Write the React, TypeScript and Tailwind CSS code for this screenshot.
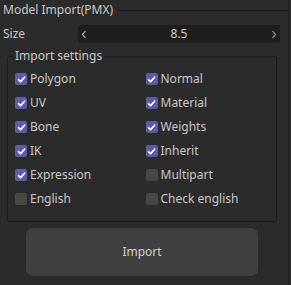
import React from "react";

const Check = ({ checked }: { checked: boolean }) => (
  <span
    className={
      "w-[12px] h-[12px] rounded-[2px] flex items-center justify-center " +
      (checked ? "bg-[#5e5ca6]" : "bg-[#474747]")
    }
  >
    {checked && (
      <svg width="9" height="9" viewBox="0 0 9 9">
        <path d="M1.5 4.6 L3.6 6.6 L7.6 2.2" stroke="#ffffff" strokeWidth="1.7" fill="none" strokeLinecap="round" strokeLinejoin="round" />
      </svg>
    )}
  </span>
);

const Item = ({ label, checked }: { label: string; checked: boolean }) => (
  <div className="flex items-center h-[24px] gap-[3px]">
    <Check checked={checked} />
    <span className="leading-none">{label}</span>
  </div>
);

export default function App() {
  const left: [string, boolean][] = [
    ["Polygon", true],
    ["UV", true],
    ["Bone", true],
    ["IK", true],
    ["Expression", true],
    ["English", false],
  ];
  const right: [string, boolean][] = [
    ["Normal", true],
    ["Material", true],
    ["Weights", true],
    ["Inherit", true],
    ["Multipart", false],
    ["Check english", false],
  ];
  return (
    <div
      className="w-[291px] h-[285px] bg-[#2b2b2b] text-[#c9c9c9] text-[12px] overflow-hidden"
      style={{ fontFamily: '"Noto Sans", "Open Sans", sans-serif' }}
    >
      <div className="relative w-[289px] h-[285px] border-r border-[#1e1e1e]">
        <div className="flex items-center h-[20px] pl-[3px]">
          <span className="leading-none mr-[4px]">Model Import(PMX)</span>
          <div className="flex-1 h-px bg-[#1e1e1e]" />
        </div>
        <div className="flex items-center mt-[5px] h-[18px] pl-[3px] pr-[8px]">
          <span className="w-[75px] leading-none">Size</span>
          <div className="flex-1 h-[18px] bg-[#1e1e1e] rounded-[3px] flex items-center justify-between px-[3px]">
            <svg width="6" height="9" viewBox="0 0 6 9"><path d="M4.5 1 L1.5 4.5 L4.5 8" stroke="#a0a0a0" strokeWidth="1.2" fill="none" /></svg>
            <span className="leading-none text-[#d0d0d0]">8.5</span>
            <svg width="6" height="9" viewBox="0 0 6 9"><path d="M1.5 1 L4.5 4.5 L1.5 8" stroke="#8a8a8a" strokeWidth="1.2" fill="none" /></svg>
          </div>
        </div>
        <div className="relative ml-[7px] mr-[11px] mt-[14px] h-[165px] border-l border-r border-b border-[#1e1e1e]">
          <div className="absolute -top-[7px] left-0 right-0 flex items-center">
            <div className="w-[5px] h-px bg-[#1e1e1e]" />
            <span className="leading-none px-[2px]">Import settings</span>
            <div className="flex-1 h-px bg-[#1e1e1e]" />
          </div>
          <div className="grid grid-cols-2 pl-[7px] pt-[10px]">
            <div className="flex flex-col">
              {left.map(([l, c]) => (
                <Item key={l} label={l} checked={c} />
              ))}
            </div>
            <div className="flex flex-col">
              {right.map(([l, c]) => (
                <Item key={l} label={l} checked={c} />
              ))}
            </div>
          </div>
        </div>
        <div className="flex mt-[6px] pl-[26px]">
          <div className="w-[232px] h-[48px] bg-[#404040] rounded-[7px] flex items-center justify-center">
            <span className="leading-none text-[#d0d0d0]">Import</span>
          </div>
        </div>
      </div>
    </div>
  );
}
